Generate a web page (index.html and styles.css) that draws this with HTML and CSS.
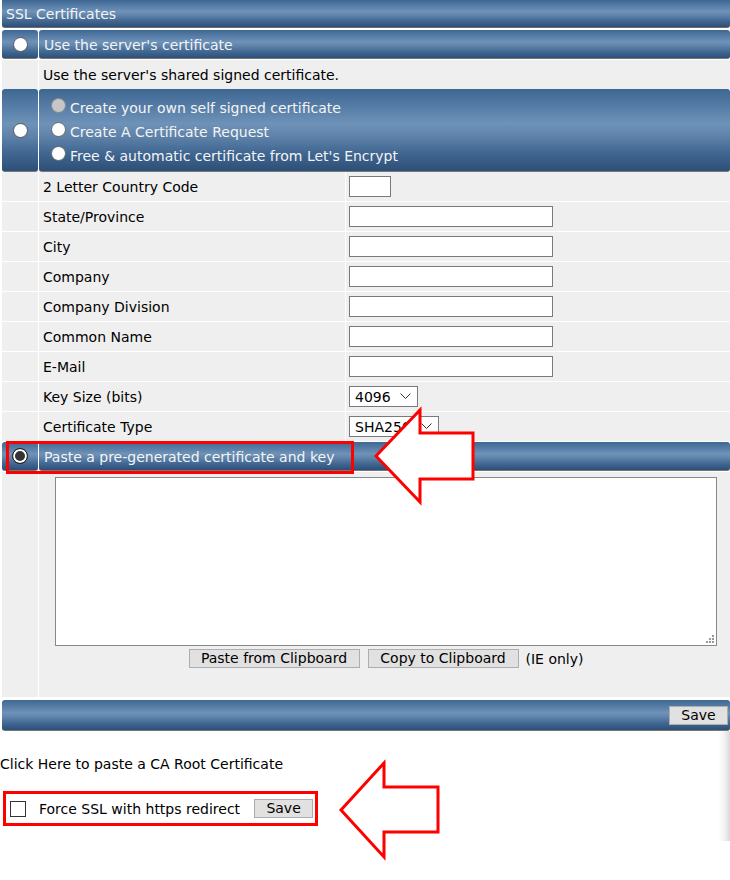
FILE: index.html
```html
<!DOCTYPE html>
<html>
<head>
<meta charset="utf-8">
<title>SSL Certificates</title>
<link rel="stylesheet" href="styles.css">
</head>
<body>
<div class="panel">
  <div class="titlebar">SSL Certificates</div>

  <div class="row r-head">
    <div class="side blue"><span class="radio"></span></div>
    <div class="main blue">Use the server's certificate</div>
  </div>

  <div class="row r-desc">
    <div class="side gray"></div>
    <div class="main gray">Use the server's shared signed certificate.</div>
  </div>

  <div class="row r-tall">
    <div class="side blue"><span class="radio"></span></div>
    <div class="main blue options">
      <div class="opt"><span class="radio sm dim"></span>Create your own self signed certificate</div>
      <div class="opt"><span class="radio sm"></span>Create A Certificate Request</div>
      <div class="opt"><span class="radio sm"></span>Free &amp; automatic certificate from Let's Encrypt</div>
    </div>
  </div>

  <div class="form">
    <div class="frow"><div class="side gray"></div><div class="label">2 Letter Country Code</div><div class="field"><span class="input tiny"></span></div></div>
    <div class="frow"><div class="side gray"></div><div class="label">State/Province</div><div class="field"><span class="input"></span></div></div>
    <div class="frow"><div class="side gray"></div><div class="label">City</div><div class="field"><span class="input"></span></div></div>
    <div class="frow"><div class="side gray"></div><div class="label">Company</div><div class="field"><span class="input"></span></div></div>
    <div class="frow"><div class="side gray"></div><div class="label">Company Division</div><div class="field"><span class="input"></span></div></div>
    <div class="frow"><div class="side gray"></div><div class="label">Common Name</div><div class="field"><span class="input"></span></div></div>
    <div class="frow"><div class="side gray"></div><div class="label">E-Mail</div><div class="field"><span class="input"></span></div></div>
    <div class="frow"><div class="side gray"></div><div class="label">Key Size (bits)</div><div class="field"><span class="select s-key">4096<svg class="chev" width="11" height="7" viewBox="0 0 11 7"><path d="M0.5 0.5 L5.5 5.5 L10.5 0.5" fill="none" stroke="#333" stroke-width="1"/></svg></span></div></div>
    <div class="frow"><div class="side gray"></div><div class="label">Certificate Type</div><div class="field"><span class="select s-type">SHA256<svg class="chev" width="11" height="7" viewBox="0 0 11 7"><path d="M0.5 0.5 L5.5 5.5 L10.5 0.5" fill="none" stroke="#333" stroke-width="1"/></svg></span></div></div>
  </div>

  <div class="row r-head">
    <div class="side blue"><span class="radio on"></span></div>
    <div class="main blue">Paste a pre-generated certificate and key</div>
  </div>

  <div class="row r-body">
    <div class="side gray"></div>
    <div class="main gray paste">
      <div class="textarea"><svg class="grip" width="8" height="8" viewBox="0 0 8 8"><rect x="6" y="0" width="2" height="2" fill="#999"/><rect x="3" y="3" width="2" height="2" fill="#999"/><rect x="6" y="3" width="2" height="2" fill="#999"/><rect x="0" y="6" width="2" height="2" fill="#999"/><rect x="3" y="6" width="2" height="2" fill="#999"/><rect x="6" y="6" width="2" height="2" fill="#999"/></svg></div>
      <div class="btns">
        <button class="btn wide1">Paste from Clipboard</button>
        <button class="btn wide2">Copy to Clipboard</button>
        <span class="ie">(IE only)</span>
      </div>
    </div>
  </div>

  <div class="savebar blue"><button class="btn save">Save</button></div>
</div>

<div class="after">
  <div class="ca">Click Here to paste a CA Root Certificate</div>
  <div class="force">
    <span class="checkbox"></span>
    <span class="force-label">Force SSL with https redirect</span>
    <button class="btn save">Save</button>
  </div>
</div>

<svg class="annot" width="730" height="880" viewBox="0 0 730 880">
  <rect x="7.5" y="442.5" width="345" height="30" fill="none" stroke="#ff0000" stroke-width="3"/>
  <polygon points="376,456 420,410 420,433 473,433 473,479 420,479 420,502" fill="#ffffff" stroke="#ff0000" stroke-width="3" stroke-linejoin="miter"/>
  <polygon points="341,810 384,763 384,787 438,787 438,832 384,832 384,857" fill="#ffffff" stroke="#ff0000" stroke-width="3" stroke-linejoin="miter"/>
</svg>
</body>
</html>
```

FILE: styles.css
```css
html, body {
  margin: 0;
  padding: 0;
  background: #ffffff;
}
body {
  font-family: "DejaVu Sans", Verdana, sans-serif;
  font-size: 14px;
  color: #000;
  width: 730px;
  height: 880px;
  overflow: hidden;
  position: relative;
}
.panel {
  margin-left: 2px;
  width: 728px;
  display: flex;
  flex-direction: column;
}
.blue {
  background: linear-gradient(to bottom, #3d6792 0%, #5279a3 18%, #6e92b8 42%, #5e82a9 58%, #406792 78%, #2d4f77 100%);
  color: #f4f4f4;
}
.gray {
  background: #efefef;
}
.titlebar {
  height: 27px;
  line-height: 28px;
  padding-left: 4px;
  border-bottom: 1px solid #6d6d6d;
  border-radius: 0 0 3px 3px;
  margin-bottom: 2px;
  background: linear-gradient(to bottom, #3d6792 0%, #5279a3 18%, #6e92b8 42%, #5e82a9 58%, #406792 78%, #2d4f77 100%);
  color: #f4f4f4;
}
.row {
  display: grid;
  grid-template-columns: 36px 1fr;
  column-gap: 1px;
}
.side {
  display: flex;
  align-items: center;
  justify-content: center;
}
.side.blue, .main.blue {
  border-radius: 3px;
  border-bottom: 1px solid #777;
}
.main {
  display: flex;
  align-items: center;
  padding-left: 5px;
}
.r-head {
  height: 29px;
  margin-bottom: 1px;
}
.r-head .main {
  padding-top: 2px;
}
.r-desc {
  height: 29px;
}
.r-desc .main {
  padding-left: 4px;
}
.r-tall {
  height: 83px;
}
.options {
  flex-direction: column;
  align-items: flex-start;
  justify-content: center;
  padding-left: 12px;
  padding-top: 3px;
  gap: 5px;
}
.opt {
  display: flex;
  align-items: center;
  height: 19px;
}
.radio {
  display: inline-block;
  width: 15px;
  height: 15px;
  box-sizing: border-box;
  border-radius: 50%;
  background: #ffffff;
  border: 1px solid #555;
}
.radio.sm {
  margin-right: 4px;
  margin-top: -4px;
  border-color: #666;
}
.radio.dim {
  background: #c6c6c6;
  border-color: #888;
}
.radio.on {
  width: 16px;
  height: 16px;
  background: #333;
  border: 1px solid #222;
  box-shadow: inset 0 0 0 2px #ffffff;
}
.form {
  display: flex;
  flex-direction: column;
  gap: 1px;
  padding-bottom: 1px;
  background: #ffffff;
}
.frow {
  display: grid;
  grid-template-columns: 36px 306px 1fr;
  column-gap: 1px;
  height: 29px;
  background: #ffffff;
}
.label {
  background: #efefef;
  display: flex;
  align-items: center;
  padding-left: 4px;
}
.field {
  background: #efefef;
  display: flex;
  align-items: center;
  padding-left: 3px;
}
.input {
  display: block;
  width: 204px;
  height: 21px;
  box-sizing: border-box;
  border: 1px solid #7a7a7a;
  background: #ffffff;
}
.input.tiny {
  width: 42px;
}
.select {
  display: flex;
  align-items: center;
  height: 21px;
  box-sizing: border-box;
  border: 1px solid #7a7a7a;
  background: #ffffff;
  padding-left: 5px;
  padding-right: 6px;
  justify-content: space-between;
}
.s-key { width: 69px; }
.s-type { width: 90px; }
.chev {
  display: block;
}
.r-body {
  height: 225px;
  margin-bottom: 3px;
}
.paste {
  flex-direction: column;
  align-items: flex-start;
  padding: 5px 14px 0 16px;
}
.textarea {
  position: relative;
  width: 662px;
  height: 169px;
  box-sizing: border-box;
  border: 1px solid #888;
  background: #ffffff;
}
.grip {
  position: absolute;
  right: 2px;
  bottom: 2px;
}
.btns {
  align-self: stretch;
  display: flex;
  justify-content: center;
  align-items: center;
  margin-top: 3px;
  gap: 8px;
}
.btn {
  font-family: "DejaVu Sans", Verdana, sans-serif;
  font-size: 14px;
  color: #000;
  background: #e1e1e1;
  border: 1px solid #adadad;
  height: 19px;
  padding: 0;
  line-height: 17px;
  margin: 0;
}
.wide1 { width: 171px; }
.wide2 { width: 151px; }
.ie { margin-left: -1px; }
.savebar {
  height: 30px;
  border-radius: 3px;
  border-bottom: 1px solid #777;
  display: flex;
  align-items: center;
  justify-content: flex-end;
  padding-right: 2px;
}
.save {
  width: 59px;
}
.after {
  height: 110px;
  background: linear-gradient(to left, #d9d9d9 0px, #f4f4f4 6px, #ffffff 12px);
  display: flex;
  flex-direction: column;
  align-items: flex-start;
}
.ca {
  margin-top: 25px;
  height: 17px;
  line-height: 17px;
}
.force {
  margin-top: 18px;
  margin-left: 3px;
  border: 3px solid #ff0000;
  box-sizing: border-box;
  height: 35px;
  width: 315px;
  display: flex;
  align-items: center;
  padding-left: 4px;
}
.checkbox {
  width: 16px;
  height: 16px;
  box-sizing: border-box;
  border: 1px solid #333;
  background: #fff;
  margin-right: 13px;
}
.force-label {
  margin-right: 14px;
}
.annot {
  position: absolute;
  left: 0;
  top: 0;
  pointer-events: none;
}
```
